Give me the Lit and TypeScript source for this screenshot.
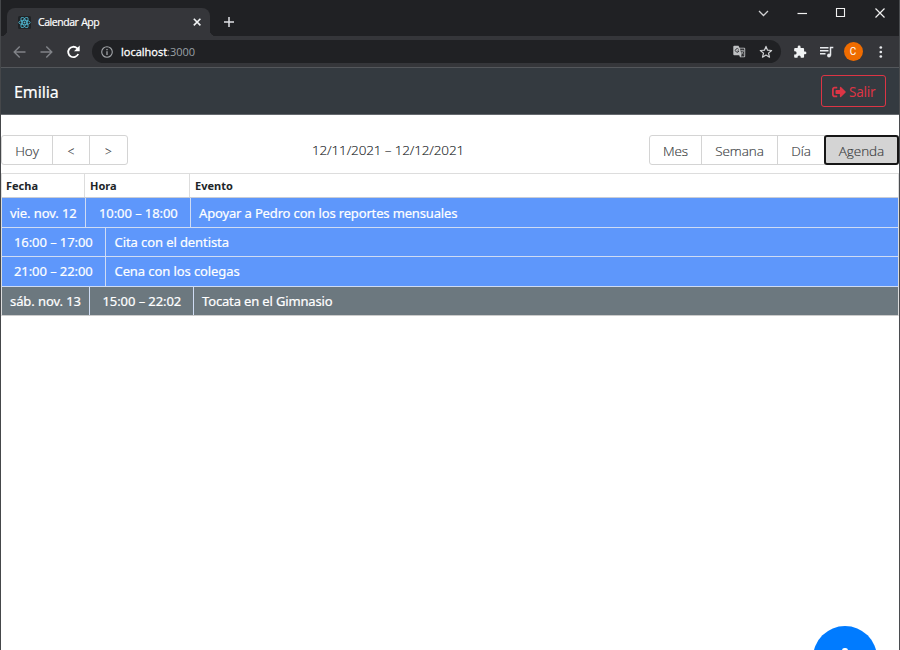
import { LitElement, html, css } from "lit";
import { customElement } from "lit/decorators.js";
import { classMap } from "lit/directives/class-map.js";

interface AgendaRow {
  date?: string;
  time: string;
  title: string;
  layout: string;
}

const rows: AgendaRow[] = [
  { date: "vie. nov. 12", time: "10:00 – 18:00", title: "Apoyar a Pedro con los reportes mensuales", layout: "first" },
  { time: "16:00 – 17:00", title: "Cita con el dentista", layout: "cont" },
  { time: "21:00 – 22:00", title: "Cena con los colegas", layout: "cont" },
  { date: "sáb. nov. 13", time: "15:00 – 22:02", title: "Tocata en el Gimnasio", layout: "other" },
];

@customElement("browser-chrome")
class BrowserChrome extends LitElement {
  static styles = css`
    :host { display: block; flex: none; font-family: "Open Sans", "Noto Sans", sans-serif; color: #fff; }
    svg { display: block; flex: none; }
    .strip { height: 36px; background: #202124; display: flex; align-items: flex-start; padding-left: 6px; box-sizing: border-box; }
    .tab { position: relative; margin-top: 8px; width: 203px; height: 28px; box-sizing: border-box; background: #35363a; border-radius: 8px 8px 0 0;
      display: flex; align-items: center; padding: 0 8.5px 0 11px; }
    .tab::before, .tab::after { content: ""; position: absolute; bottom: 0; width: 6px; height: 6px; }
    .tab::before { left: -6px; background: radial-gradient(circle at 0 0, #202124 6px, #35363a 6.5px); }
    .tab::after { right: -6px; background: radial-gradient(circle at 100% 0, #202124 6px, #35363a 6.5px); }
    .title { margin-left: 7px; font-size: 10.5px; line-height: 14px; letter-spacing: -0.45px; word-spacing: 0.5px; font-weight: 500; white-space: nowrap; flex: 1; -webkit-text-stroke: 0.2px #fff; }
    .plus { margin: 16px 0 0 13px; }
    .wins { margin: 6px 12px 0 auto; display: flex; gap: 25px; }
    .bar { height: 31px; background: #35363a; display: flex; align-items: center; padding: 0 10px 0 11px; box-sizing: border-box; }
    .nav { display: flex; gap: 13px; }
    .omni { margin-left: 12px; width: 689px; height: 23px; border-radius: 12px; background: #202124; display: flex; align-items: center;
      padding: 0 8.5px 0 9px; box-sizing: border-box; }
    .url { margin-left: 8px; font-size: 11px; line-height: 16px; color: #9aa0a6; flex: 1; white-space: nowrap; }
    .host { color: #fff; -webkit-text-stroke: 0.3px #fff; }
    .ext { display: flex; align-items: center; margin-left: 11.5px; }
    .queue { margin-left: 12px; }
    .avatar { width: 19px; height: 19px; border-radius: 50%; background: #ef6c00; margin: 0 11px 0 10px; font: 10px/19px Roboto, sans-serif; text-align: center; }
    .gap { margin-left: 13px; }
    .edge { height: 1px; background: #54575b; }
  `;

  render() {
    return html`
      <div class="strip">
        <div class="tab">
          <svg width="13" height="13" viewBox="0 0 13 13" fill="none" stroke="#4fb5cf" stroke-width=".9">
            <rect width="13" height="13" rx="1.5" fill="#202326" stroke="none"/>
            <ellipse cx="6.5" cy="6.5" rx="5.7" ry="2.2"/>
            <ellipse cx="6.5" cy="6.5" rx="5.7" ry="2.2" transform="rotate(60 6.5 6.5)"/>
            <ellipse cx="6.5" cy="6.5" rx="5.7" ry="2.2" transform="rotate(120 6.5 6.5)"/>
            <circle cx="6.5" cy="6.5" r="1" fill="#4fb5cf" stroke="none"/>
          </svg>
          <span class="title">Calendar App</span>
          <svg width="10" height="10" viewBox="0 0 10 10" stroke="#f1f3f4" stroke-width="1.6"><path d="M1.8 1.8l6.6 6.6M8.4 1.8L1.8 8.4"/></svg>
        </div>
        <svg class="plus" width="12" height="12" viewBox="0 0 12 12" stroke="#dfe1e5" stroke-width="1.5"><path d="M6 1v10M1 6h10"/></svg>
        <div class="wins">
          <svg width="14" height="14" viewBox="0 0 14 14" fill="none" stroke="#d0d1d3" stroke-width="1.3"><path d="M3 5l4.5 4.5L12 5"/></svg>
          <svg width="14" height="14" viewBox="0 0 14 14" stroke="#f1f1f1" stroke-width="1.2"><path d="M2.5 7.5H12"/></svg>
          <svg width="14" height="14" viewBox="0 0 14 14" fill="none" stroke="#f1f1f1" stroke-width="1.1"><path d="M2.500 2.500h8v8h-8z"/></svg>
          <svg width="14" height="14" viewBox="0 0 14 14" stroke="#f1f1f1" stroke-width="1.2"><path d="M2.5 2.5l9 9M11.5 2.5l-9 9"/></svg>
        </div>
      </div>
      <div class="bar">
        <div class="nav">
          <svg width="14" height="14" viewBox="0 0 14 14" fill="none" stroke="#818388" stroke-width="1.4"><path d="M13.500 7H2.500M7.700 1.500L2.200 7l5.500 5.500"/></svg>
          <svg width="14" height="14" viewBox="0 0 14 14" fill="none" stroke="#818388" stroke-width="1.4"><path d="M1.500 7h11M7.300 1.500L12.800 7l-5.500 5.500"/></svg>
          <svg width="14" height="14" viewBox="0 0 14 14" fill="none" stroke="#fff" stroke-width="1.8"><path d="M12.200 9A5.200 5.200 0 1 1 11 3.200L12.400 4.600"/><path d="M13.700 .6v5.700H8z" fill="#fff" stroke="none"/></svg>
        </div>
        <div class="omni">
          <svg width="12" height="12" viewBox="0 0 12 12" fill="none" stroke="#a2a5a9" stroke-width="1.1"><circle cx="6" cy="6" r="5.3"/><path d="M6 5.3V9M6 3v1.3" stroke-width="1.3"/></svg>
          <span class="url"><span class="host">localhost</span>:3000</span>
          <svg width="13" height="13" viewBox="0 0 13 13"><path d="M1.3.8h4.2l1 2h4.7a1 1 0 0 1 1 1v7.4a1 1 0 0 1-1 1H7l-.8-2H1.3a1 1 0 0 1-1-1V1.8a1 1 0 0 1 1-1z" fill="#bfc1c3"/><path d="M7 3.5h4.3v8H7.7l.9-1.4z" fill="#303134"/><path d="M5.7 4.4a1.8 1.8 0 1 0 .2 1.6H4.4" fill="none" stroke="#303134" stroke-width=".9"/><path d="M7.5 5.7h3.4M9.2 4.8v.9M10.3 5.8c-.3 1.5-1.2 2.3-2 2.9M8.3 6.8c.5 1 1.3 1.8 2.2 2.2" fill="none" stroke="#bfc1c3" stroke-width=".7"/></svg>
          <svg class="gap" width="14" height="14" viewBox="0 0 14 14" fill="none" stroke="#d0d2d4" stroke-width="1.2" stroke-linejoin="round"><path d="M7 1.4l1.55 3.8 4.1.3-3.15 2.65 1 4L7 10l-3.5 2.15 1-4L1.35 5.5l4.1-.3z"/></svg>
        </div>
        <div class="ext">
          <svg width="14" height="14" viewBox="0 0 24 24" fill="#f1f3f4"><path d="M20.5 11H19V7c0-1.1-.9-2-2-2h-4V3.5a2.5 2.5 0 0 0-5 0V5H4c-1.1 0-2 .9-2 2v3.8h1.5a2.7 2.7 0 0 1 0 5.4H2V20c0 1.100.9 2 2 2h3.8v-1.500a2.700 2.700 0 0 1 5.400 0V22H17c1.100 0 2-.9 2-2v-4h1.500a2.500 2.500 0 0 0 0-5z"/></svg>
          <svg class="queue" width="15" height="14" viewBox="0 0 15 14" fill="none" stroke="#e8eaed" stroke-width="1.5"><path d="M1 2.750h8.500M1 5.750h8.500M1 8.750h5.500"/><path d="M11.500 10.500v-8h2.800" /><circle cx="10" cy="10.500" r="1.900" fill="#e8eaed" stroke="none"/></svg>
          <span class="avatar">C</span>
          <svg width="14" height="14" viewBox="0 0 14 14" fill="#e8eaed"><circle cx="6.800" cy="2.500" r="1.350"/><circle cx="6.800" cy="7" r="1.350"/><circle cx="6.800" cy="11.500" r="1.350"/></svg>
        </div>
      </div>
      <div class="edge"></div>
    `;
  }
}

@customElement("app-root")
class AppRoot extends LitElement {
  static styles = css`
    :host { display: flex; flex-direction: column; position: relative; box-sizing: border-box; width: 900px; height: 650px; overflow: hidden; background: #fff;
      border-left: 1px solid #45474a; border-right: 1px solid #4a4c4f; font-family: "Noto Sans", "Open Sans", sans-serif; }
    .navbar { flex: none; height: 47px; box-sizing: border-box; background: #343a40; border-bottom: 1px solid #64686d; display: flex; align-items: center;
      justify-content: space-between; padding: 0 13px; color: #fff; }
    .brand { font-size: 16px; letter-spacing: -0.1px; padding-top: 2px; -webkit-text-stroke: 0.2px #fff; }
    .exit { display: flex; align-items: center; box-sizing: border-box; width: 65px; height: 32px; border: 1px solid #dc3545; border-radius: 3px;
      color: #dc3545; font: 13.500px "Noto Sans", sans-serif; letter-spacing: -0.250px; background: none; padding: 1px 0 0 10px; gap: 3px; }
    .toolbar { flex: none; margin-top: 20px; height: 30px; display: flex; justify-content: space-between; }
    .group { display: flex; }
    .btn { box-sizing: border-box; height: 30px; background: #fff; border: 1px solid #d4d4d4; margin: 0 0 0 -1px; padding: 1px 0 0 0; color: #373a3c;
      font: 300 13.500px/28px "Open Sans", "Noto Sans", sans-serif; letter-spacing: -0.050px; text-align: center; -webkit-text-stroke: 0.150px #373a3c; }
    .btn:first-child { margin-left: 0; border-radius: 3px 0 0 3px; }
    .btn:last-child { border-radius: 0 3px 3px 0; }
    .today { width: 52px; }
    .arrow { width: 38px; font-size: 12px; padding-top: 2px; }
    .btn.arrow:last-child { width: 39px; }
    .mes { width: 53px; }
    .semana { width: 77px; }
    .dia { width: 48px; }
    .btn.agenda { width: 75px; background: #d4d4d4; border: 2px solid #161616; line-height: 26px; border-radius: 3px; position: relative; }
    .label { font: 300 13.500px/31px "Open Sans", "Noto Sans", sans-serif; letter-spacing: -0.150px; color: #202326; margin-right: 1px;
      -webkit-text-stroke: 0.150px #202326; }
    .table { flex: none; margin-top: 8px; border-top: 1px solid #ddd; border-right: 1px solid #ddd; border-left: 1px solid #ddd; }
    .head { display: flex; height: 24px; font-size: 11px; font-weight: 700; line-height: 24px; color: #212529; border-bottom: 1px solid #c9cdd6; box-sizing: border-box; }
    .head span { padding-left: 5px; box-sizing: border-box; border-right: 1px solid #ddd; }
    .head span:last-child { border: 0; }
    .head .hd { width: 83px; padding-left: 4px; }
    .hh { width: 105px; }
    .row { display: flex; height: 29.500px; box-sizing: border-box; background: #5e97fb; border-bottom: 1px solid #cfdcf4; color: #fff; font-size: 13px;
      line-height: 30px; letter-spacing: -0.150px; white-space: nowrap; -webkit-text-stroke: 0.200px #fff; }
    .row.cont, .row.other { line-height: 28.500px; }
    .row.cont .title { padding-left: 8.500px; letter-spacing: -0.090px; }
    .row.other { background: #6c787f; border-color: #ccc; }
    .cell { box-sizing: border-box; border-right: 1px solid #cfdcf4; }
    .date { width: 84px; padding-left: 8px; letter-spacing: -0.080px; }
    .time { width: 105px; padding-left: 13px; letter-spacing: -0.080px; }
    .cont .time { width: 104px; padding-left: 12px; }
    .other .date { width: 87.500px; }
    .other .time { width: 104.500px; }
    .title { padding-left: 8px; }
    .fab { position: absolute; left: 812px; top: 626px; width: 64px; height: 64px; border-radius: 50%; background: #007bff; }
    .fab svg { display: block; margin: 22px auto 0; }
  `;

  render() {
    return html`
      <browser-chrome></browser-chrome>
      <div class="navbar">
        <span class="brand">Emilia</span>
        <button class="exit">
          <svg width="14" height="14" viewBox="0 0 512 512" fill="#dc3545"><path d="M497 273L329 441c-15 15-41 4.500-41-17v-96H152c-13.300 0-24-10.700-24-24v-96c0-13.300 10.700-24 24-24h136V88c0-21.400 25.900-32 41-17l168 168c9.300 9.400 9.300 24.600 0 34zM192 436v-40c0-6.600-5.400-12-12-12H96c-17.700 0-32-14.300-32-32V160c0-17.700 14.300-32 32-32h84c6.600 0 12-5.400 12-12V76c0-6.600-5.400-12-12-12H96c-53 0-96 43-96 96v192c0 53 43 96 96 96h84c6.600 0 12-5.400 12-12z"/></svg>
          <span>Salir</span>
        </button>
      </div>
      <div class="toolbar">
        <div class="group">
          <button class="btn today">Hoy</button>
          <button class="btn arrow">&lt;</button>
          <button class="btn arrow">&gt;</button>
        </div>
        <span class="label">12/11/2021 – 12/12/2021</span>
        <div class="group">
          <button class="btn mes">Mes</button>
          <button class="btn semana">Semana</button>
          <button class="btn dia">Día</button>
          <button class="btn agenda">Agenda</button>
        </div>
      </div>
      <div class="table">
        <div class="head"><span class="hd">Fecha</span><span class="hh">Hora</span><span>Evento</span></div>
        ${rows.map(
          (r) => html`<div class=${classMap({ row: true, [r.layout]: true })}>
            ${r.date ? html`<span class="cell date">${r.date}</span>` : ""}
            <span class="cell time">${r.time}</span>
            <span class="title">${r.title}</span>
          </div>`
        )}
      </div>
      <div class="fab">
        <svg width="18" height="20" viewBox="0 0 18 20"><path d="M8.500 0h1a2.500 2.500 0 0 1 2.500 2.500V7h6v4h-6v7H7v-7H0V7h6V2.500A2.500 2.500 0 0 1 8.500 0z" fill="#fff"/></svg>
      </div>
    `;
  }
}
